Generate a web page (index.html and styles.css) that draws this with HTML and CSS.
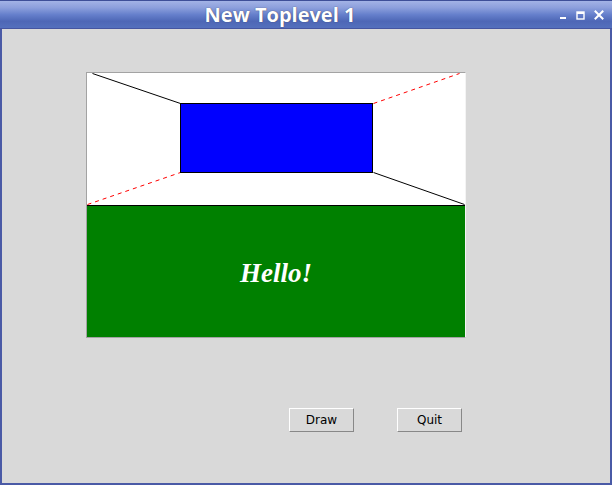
FILE: index.html
```html
<!DOCTYPE html>
<html>
<head>
<meta charset="utf-8">
<link rel="stylesheet" href="styles.css">
</head>
<body>
<div class="window">
  <div class="titlebar">
    <span class="title">New Toplevel 1</span>
    <div class="controls">
      <svg width="8" height="8" viewBox="0 0 8 8"><rect x="1" y="5" width="6" height="2" fill="#fff"/></svg>
      <svg width="9" height="9" viewBox="0 0 9 9"><rect x="1" y="1" width="7" height="7" fill="none" stroke="#fff" stroke-width="1.4"/><rect x="1" y="1" width="7" height="2" fill="#fff"/></svg>
      <svg width="10" height="10" viewBox="0 0 10 10"><path d="M1.5 1.5 L8.5 8.5 M8.5 1.5 L1.5 8.5" stroke="#fff" stroke-width="2" stroke-linecap="square"/></svg>
    </div>
  </div>
  <div class="content">
    <div class="canvas">
      <svg width="378" height="264" viewBox="0 0 378 264">
        <rect x="0" y="0" width="378" height="132" fill="#fff"/>
        <line x1="5.5" y1="0.5" x2="93.5" y2="30.5" stroke="#000" stroke-width="1"/>
        <line x1="286.5" y1="99.5" x2="377.5" y2="131.5" stroke="#000" stroke-width="1"/>
        <line x1="0.5" y1="131.5" x2="93.5" y2="99.5" stroke="#f00" stroke-width="1" stroke-dasharray="4 4"/>
        <line x1="286.5" y1="30.5" x2="372.5" y2="0.5" stroke="#f00" stroke-width="1" stroke-dasharray="4 4"/>
        <rect x="93.5" y="30.5" width="192" height="69" fill="#00f" stroke="#000" stroke-width="1"/>
        <rect x="0" y="132" width="378" height="132" fill="#008000"/>
        <line x1="0" y1="132.5" x2="378" y2="132.5" stroke="#000" stroke-width="1"/>
        <text x="189" y="209" text-anchor="middle" class="hello">Hello!</text>
      </svg>
    </div>
    <div class="buttons">
      <button class="btn">Draw</button>
      <button class="btn">Quit</button>
    </div>
  </div>
</div>
</body>
</html>
```
FILE: styles.css
```css
html, body {
  margin: 0;
  padding: 0;
  width: 612px;
  height: 485px;
  overflow: hidden;
  background: #d9d9d9;
}
.window {
  width: 612px;
  height: 485px;
  box-sizing: border-box;
  display: flex;
  flex-direction: column;
  border-left: 2px solid #4a5aa6;
  border-right: 2px solid #4a5aa6;
  border-bottom: 2px solid #4a5aa6;
}
.titlebar {
  height: 29px;
  margin: 0 -2px;
  box-sizing: border-box;
  border-top: 1px solid #3e4f98;
  border-bottom: 1px solid #4555a0;
  background: linear-gradient(to bottom, #a3b3e6 0%, #8c9fdc 25%, #6680cc 50%, #4e67b6 75%, #5470bd 100%);
  display: flex;
  align-items: center;
  justify-content: center;
  position: relative;
}
.title {
  font-family: "Open Sans", "Noto Sans", sans-serif;
  font-weight: bold;
  font-size: 20px;
  color: #fff;
  margin-left: -52px;
  margin-top: -1px;
  text-shadow: 0 0 1px #334;
}
.controls {
  position: absolute;
  right: 8px;
  top: 9px;
  display: flex;
  gap: 9px;
  align-items: flex-end;
}
.controls svg { display: block; }
.content {
  flex: 1;
  background: #d9d9d9;
  display: flex;
  flex-direction: column;
  padding: 43px 0 0 84px;
}
.canvas {
  width: 378px;
  height: 264px;
  border-top: 1px solid #a3a3a3;
  border-left: 1px solid #a3a3a3;
  border-right: 1px solid #f4f4f4;
  border-bottom: 1px solid #a3a3a3;
  background: #fff;
}
.canvas svg { display: block; }
.hello {
  font-family: "Liberation Serif", serif;
  font-style: italic;
  font-weight: bold;
  font-size: 27px;
  fill: #fff;
}
.buttons {
  display: flex;
  gap: 43px;
  margin-top: 70px;
  padding-left: 203px;
}
.btn {
  width: 65px;
  height: 24px;
  box-sizing: border-box;
  background: #d9d9d9;
  border-top: 1px solid #fff;
  border-left: 1px solid #fff;
  border-right: 1px solid #888;
  border-bottom: 1px solid #888;
  font-family: "DejaVu Sans", sans-serif;
  font-size: 12px;
  color: #000;
  padding: 0;
  margin: 0;
}
```
